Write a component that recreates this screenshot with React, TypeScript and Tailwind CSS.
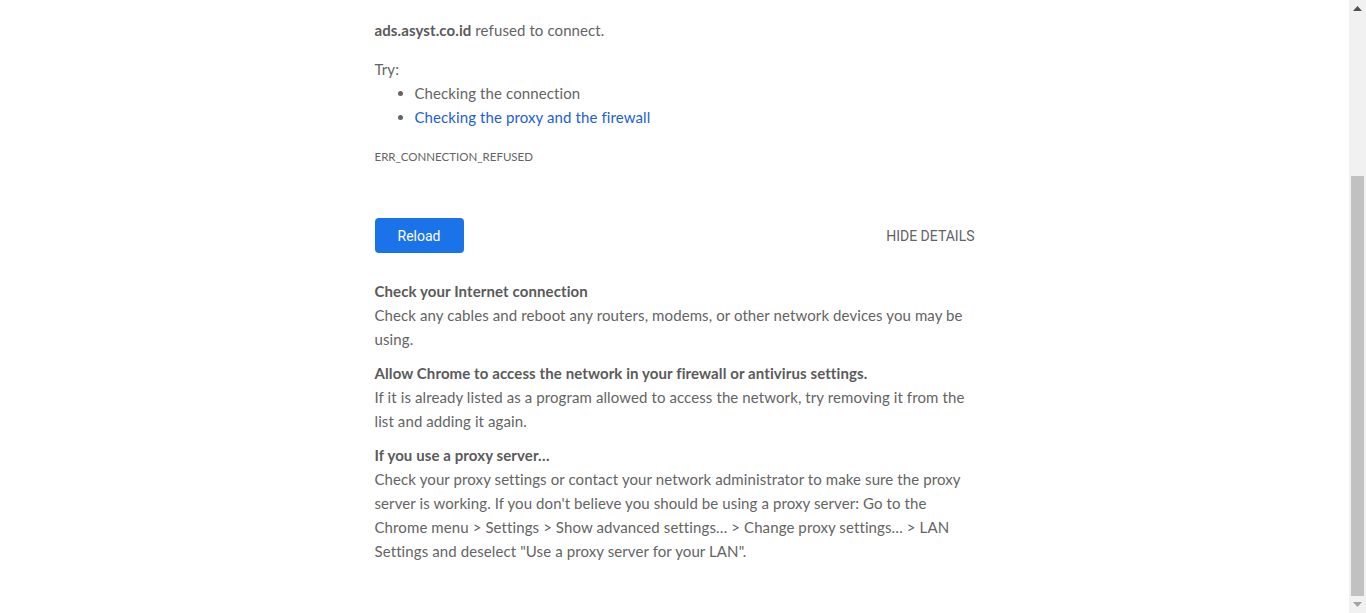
import { Fragment } from 'react'

const sections = [
  {
    title: 'Check your Internet connection',
    lines: ['Check any cables and reboot any routers, modems, or other network devices you may be', 'using.'],
  },
  {
    title: 'Allow Chrome to access the network in your firewall or antivirus settings.',
    lines: [
      'If it is already listed as a program allowed to access the network, try removing it from the',
      'list and adding it again.',
    ],
  },
  {
    title: 'If you use a proxy server…',
    lines: [
      'Check your proxy settings or contact your network administrator to make sure the proxy',
      "server is working. If you don't believe you should be using a proxy server: Go to the",
      'Chrome menu > Settings > Show advanced settings… > Change proxy settings… > LAN',
      'Settings and deselect "Use a proxy server for your LAN".',
    ],
  },
]

function Scrollbar() {
  return (
    <div className="flex h-full w-[17px] shrink-0 flex-col bg-[#f1f1f1]">
      <div className="flex h-[17px] items-center justify-center">
        <svg width="9" height="5" viewBox="0 0 9 5">
          <path d="M0 5 L4.5 0 L9 5 Z" fill="#505050" />
        </svg>
      </div>
      <div className="flex-1 px-[2px] pt-[159px]">
        <div className="h-[420px] bg-[#c1c1c1]" />
      </div>
      <div className="flex h-[17px] items-center justify-center">
        <svg width="9" height="5" viewBox="0 0 9 5">
          <path d="M0 0 L9 0 L4.5 5 Z" fill="#a3a3a3" />
        </svg>
      </div>
    </div>
  )
}

export default function App() {
  return (
    <div className="flex h-screen w-full overflow-hidden bg-white">
      <main
        className="flex-1 text-[15px] leading-6 tracking-[0.1px] text-[#646464]"
        style={{ fontFamily: '"Segoe UI", Lato, "Open Sans", sans-serif' }}
      >
        <div className="mx-auto w-[600px] pt-[18px]">
          <p>
            <strong className="font-bold text-[#5a5a5a]">ads.asyst.co.id</strong> refused to connect.
          </p>

          <p className="mt-[15px]">Try:</p>
          <ul className="list-disc pl-10 marker:text-[#646464]">
            <li>Checking the connection</li>
            <li>
              <a href="#" className="text-[#2160d6]">
                Checking the proxy and the firewall
              </a>
            </li>
          </ul>

          <div className="mt-[20px] text-[11.5px] leading-4 tracking-normal uppercase">ERR_CONNECTION_REFUSED</div>

          <div className="mt-[53px] flex items-center justify-between">
            <button
              type="button"
              className="h-[35px] w-[89px] rounded bg-[#1a73e8] text-sm font-normal tracking-normal text-white"
              style={{ fontFamily: 'Roboto, Arial, sans-serif' }}
            >
              Reload
            </button>
            <button
              type="button"
              className="text-sm tracking-normal text-[#5f6368]"
              style={{ fontFamily: 'Roboto, Arial, sans-serif' }}
            >
              HIDE DETAILS
            </button>
          </div>

          <div className="mt-[26px]">
            {sections.map((s) => (
              <div key={s.title} className="mb-[10px]">
                <p className="font-bold text-[#5a5a5a]">{s.title}</p>
                <p className="whitespace-nowrap">
                  {s.lines.map((l, i) => (
                    <Fragment key={i}>
                      {l}
                      {i < s.lines.length - 1 && <br />}
                    </Fragment>
                  ))}
                </p>
              </div>
            ))}
          </div>
        </div>
      </main>
      <Scrollbar />
    </div>
  )
}
